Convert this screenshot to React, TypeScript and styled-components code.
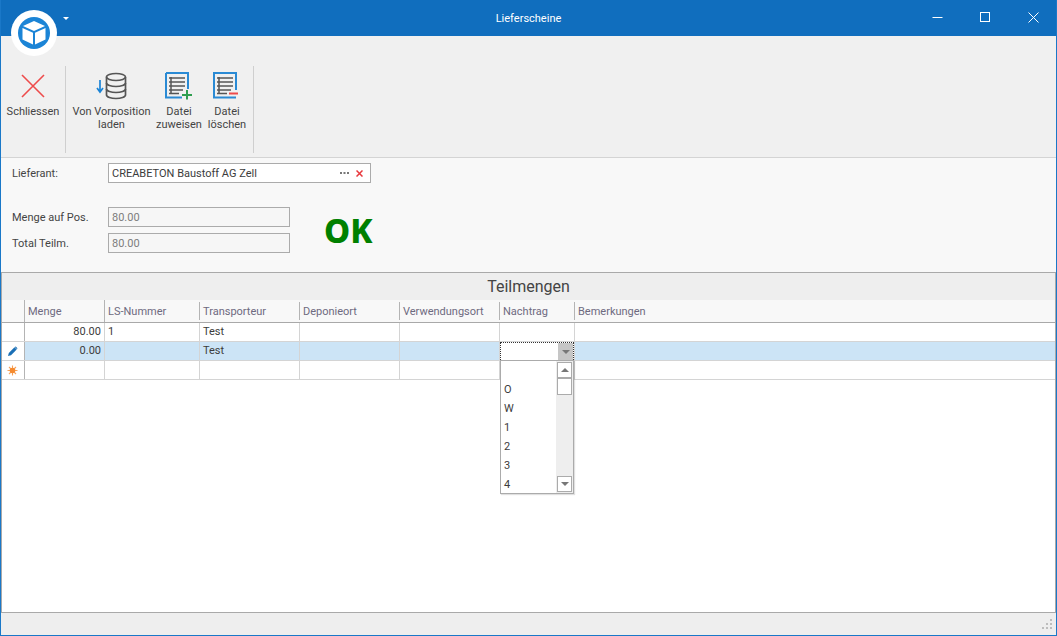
import React from 'react';
import styled, { createGlobalStyle } from 'styled-components';

const GlobalStyle = createGlobalStyle`
  html, body { margin: 0; padding: 0; background: #fff; }
  * { box-sizing: border-box; }
`;

const Window = styled.div`
  position: relative;
  width: 1057px;
  height: 636px;
  display: flex;
  flex-direction: column;
  overflow: hidden;
  border-left: 1px solid #1a78c8;
  border-right: 1px solid #1a78c8;
  border-bottom: 1px solid #1a78c8;
  font-family: Roboto, 'Liberation Sans', Arial, sans-serif;
  font-size: 11px;
  color: #3c3c3c;
  background: #f0f0f0;
`;

const TitleBar = styled.div`
  position: relative;
  height: 36px;
  margin: 0 -1px;
  flex: none;
  background: #106ebe;
  color: #fff;
  display: flex;
  align-items: center;
  justify-content: center;
  font-size: 11px;
`;

const Logo = styled.div`
  position: absolute;
  left: 11px;
  top: 10px;
  width: 46px;
  height: 46px;
  z-index: 3;
`;

const QuickCaret = styled.div`
  position: absolute;
  left: 63px;
  top: 17px;
  width: 0;
  height: 0;
  border-left: 3px solid transparent;
  border-right: 3px solid transparent;
  border-top: 3px solid #fff;
`;

const WindowButtons = styled.div`
  position: absolute;
  right: 0;
  top: 0;
  height: 36px;
  display: flex;
`;

const WindowButton = styled.div`
  width: 48px;
  height: 36px;
  display: flex;
  align-items: center;
  justify-content: center;
  padding-bottom: 1px;
`;

const Ribbon = styled.div`
  flex: none;
  height: 122px;
  padding: 30px 0 4px 3px;
  display: flex;
  background: #f0f0f0;
  border-bottom: 1px solid #d4d4d4;
`;

const RibbonGroup = styled.div`
  display: flex;
  padding-right: 3px;
  margin-right: 3px;
  border-right: 1px solid #cfcfcf;
`;

const RibbonButton = styled.div<{ $width: number }>`
  width: ${(p) => p.$width}px;
  display: flex;
  flex-direction: column;
  align-items: center;
  text-align: center;
  line-height: 13px;
  color: #444;
`;

const RibbonIcon = styled.div`
  height: 32px;
  margin-top: 4px;
  margin-bottom: 3px;
  display: flex;
  align-items: center;
  justify-content: center;
`;

const FormPanel = styled.div`
  flex: none;
  height: 114px;
  background: #f8f8f8;
  padding: 5px 0 0 11px;
  display: flex;
  flex-direction: column;
`;

const FormRow = styled.div<{ $gap?: number }>`
  display: flex;
  align-items: center;
  height: 20px;
  margin-top: ${(p) => p.$gap ?? 0}px;
`;

const FieldLabel = styled.div`
  width: 96px;
  color: #444;
`;

const LookupBox = styled.div`
  width: 263px;
  height: 20px;
  background: #fff;
  border: 1px solid #ababab;
  display: flex;
  align-items: center;
  padding: 0 3px;
  color: #3c3c3c;
`;

const LookupText = styled.div`
  flex: 1;
`;

const LookupButton = styled.div`
  width: 15px;
  display: flex;
  justify-content: center;
  align-items: center;
`;

const ReadOnlyBox = styled.div`
  width: 182px;
  height: 20px;
  background: #f6f6f6;
  border: 1px solid #ababab;
  display: flex;
  align-items: center;
  padding: 0 3px;
  color: #7d7d7d;
`;

const FigureArea = styled.div`
  display: flex;
  align-items: center;
`;

const FigureFields = styled.div`
  display: flex;
  flex-direction: column;
`;

const OkText = styled.div`
  margin-left: 34px;
  margin-top: 25px;
  font-family: 'Noto Sans', Verdana, sans-serif;
  font-weight: 800;
  font-size: 33px;
  color: #008000;
  line-height: 36px;
`;

const GridPanel = styled.div`
  flex: 1;
  display: flex;
  flex-direction: column;
  border: 1px solid #a9a9a9;
  background: #fff;
`;

const GroupTitle = styled.div`
  flex: none;
  height: 27px;
  background: #eeeeee;
  display: flex;
  align-items: center;
  justify-content: center;
  font-size: 16px;
  color: #444;
`;

const GridColumns = '23px 80px 95px 100px 100px 100px 75px 1fr';

const HeaderRow = styled.div`
  flex: none;
  height: 23px;
  display: grid;
  grid-template-columns: ${GridColumns};
  background: #f8f8f8;
  border-bottom: 1px solid #a9a9a9;
`;

const HeaderCell = styled.div<{ $tall?: boolean }>`
  color: #6e6a80;
  padding: ${(p) => (p.$tall ? 4 : 2)}px 3px 0;
  height: ${(p) => (p.$tall ? 22 : 18)}px;
  margin-top: ${(p) => (p.$tall ? 0 : 2)}px;
  line-height: 16px;
  border-right: 1px solid #b4b4b4;
`;

const Row = styled.div<{ $selected?: boolean }>`
  flex: none;
  height: 19px;
  display: grid;
  grid-template-columns: ${GridColumns};
  border-bottom: 1px solid #d4d4d4;
  background: ${(p) => (p.$selected ? '#cce4f6' : '#fff')};
  &:nth-child(n) > div:first-child {
    background: #fff;
  }
`;

const Cell = styled.div<{ $right?: boolean }>`
  position: relative;
  border-right: 1px solid #d4d4d4;
  padding: 0 3px;
  line-height: 18px;
  text-align: ${(p) => (p.$right ? 'right' : 'left')};
  color: #3c3c3c;
`;

const IndicatorCell = styled.div`
  border-right: 1px solid #b4b4b4;
  display: flex;
  align-items: center;
  justify-content: center;
  padding-right: 1px;
`;

const PlainCell = styled.div`
  &:last-child {
    border: 0;
  }
`;

const GridBody = styled.div`
  flex: 1;
  background: #fff;
`;

const ComboEditor = styled.div`
  position: absolute;
  left: 0;
  top: 0;
  width: 74px;
  height: 18px;
  background: #fff;
  border: 1px dotted #333;
  border-bottom: 0;
  display: flex;
  justify-content: flex-end;
`;

const ComboArrow = styled.div`
  width: 15px;
  background: #c6c6c6;
  display: flex;
  align-items: center;
  justify-content: center;
`;

const Caret = styled.div<{ $up?: boolean }>`
  width: 0;
  height: 0;
  border-left: 4px solid transparent;
  border-right: 4px solid transparent;
  ${(p) => (p.$up ? 'border-bottom: 4px solid #777;' : 'border-top: 4px solid #777;')}
`;

const DropDown = styled.div`
  position: absolute;
  left: 0;
  top: 18px;
  width: 74px;
  height: 134px;
  background: #fff;
  border: 1px solid #ababab;
  box-shadow: 1px 1px 1px rgba(0, 0, 0, 0.12);
  z-index: 2;
  display: flex;
`;

const DropList = styled.div`
  flex: 1;
  padding: 0 3px;
`;

const DropItem = styled.div`
  height: 19px;
  line-height: 19px;
  color: #3c3c3c;
`;

const ScrollBar = styled.div`
  width: 17px;
  background: #eeeeee;
  display: flex;
  flex-direction: column;
  padding: 1px;
`;

const ScrollButton = styled.div`
  width: 15px;
  height: 16px;
  flex: none;
  background: #fff;
  border: 1px solid #ababab;
  display: flex;
  align-items: center;
  justify-content: center;
`;

const ScrollThumb = styled.div`
  width: 15px;
  height: 17px;
  flex: none;
  background: #fff;
  border: 1px solid #ababab;
`;

const ScrollTrack = styled.div`
  flex: 1;
`;

const StatusBar = styled.div`
  flex: none;
  height: 22px;
  background: #eeeeee;
  display: flex;
  align-items: flex-end;
  justify-content: flex-end;
  padding: 0 3px 4px 0;
`;

const columns = ['Menge', 'LS-Nummer', 'Transporteur', 'Deponieort', 'Verwendungsort', 'Nachtrag', 'Bemerkungen'];
const dropItems = ['', 'O', 'W', '1', '2', '3', '4'];

function LogoIcon() {
  return (
    <svg width="46" height="46" viewBox="0 0 46 46">
      <circle cx="23" cy="23" r="23" fill="#fff" />
      <circle cx="23" cy="23" r="16" fill="#1b84d6" />
      <path d="M23 11 L34 16 L23 21 L12 16 Z" fill="#fff" />
      <path d="M11.5 18 L22 22.7 L22 34.5 L11.5 29.5 Z" fill="#fff" />
      <path d="M34.5 18 L24 22.7 L24 34.5 L34.5 29.5 Z" fill="#fff" />
    </svg>
  );
}

function CloseIcon() {
  return (
    <svg width="26" height="26" viewBox="0 0 26 26">
      <path d="M2 2 L24 24 M24 2 L2 24" stroke="#ee4b4b" strokeWidth="1.6" fill="none" />
    </svg>
  );
}

function DatabaseIcon() {
  return (
    <svg width="32" height="28" viewBox="0 0 32 28">
      <path d="M4 8 V19 M1 16 L4 20 L7 16" stroke="#1b84d6" strokeWidth="1.7" fill="none" />
      <g stroke="#555" strokeWidth="1.7" fill="none">
        <ellipse cx="20" cy="5" rx="9.5" ry="3.5" />
        <path d="M10.5 5 V23 C10.5 25 15 26.5 20 26.5 C25 26.5 29.5 25 29.5 23 V5" />
        <path d="M10.5 11 C10.5 13 15 14.5 20 14.5 C25 14.5 29.5 13 29.5 11" />
        <path d="M10.5 17 C10.5 19 15 20.5 20 20.5 C25 20.5 29.5 19 29.5 17" />
      </g>
    </svg>
  );
}

function FileIcon({ sign }: { sign: 'plus' | 'minus' }) {
  return (
    <svg width="28" height="28" viewBox="0 0 28 28">
      {sign === 'plus' ? (
        <path d="M1 1 H23 V17 M17 25.5 H1 V1" stroke="#2a8ad4" strokeWidth="2" fill="none" />
      ) : (
        <path d="M23 18 V1 H1 V25.5 H23" stroke="#2a8ad4" strokeWidth="2" fill="none" />
      )}
      <g stroke="#555" strokeWidth="1.5">
        <path d="M6 5 V22" />
        <path d="M4 6 H20 M4 10 H20 M4 14 H20 M4 18 H18 M4 21.5 H14" />
      </g>
      {sign === 'plus' ? (
        <path d="M22 18 V27.5 M17 23 H27" stroke="#2e9e4f" strokeWidth="2" fill="none" />
      ) : (
        <path d="M16 21.5 H25" stroke="#ee4b4b" strokeWidth="2" fill="none" />
      )}
    </svg>
  );
}

function PencilIcon() {
  return (
    <svg width="11" height="11" viewBox="0 0 11 11">
      <path d="M1 10 L1.8 7 L7.5 1.3 L9.7 3.5 L4 9.2 Z" fill="#1a6fb5" />
      <path d="M7.8 1 L8.8 0.6 L10.4 2.2 L10 3.2 Z" fill="#1a6fb5" />
    </svg>
  );
}

function NewRowIcon() {
  return (
    <svg width="11" height="11" viewBox="0 0 11 11">
      <g stroke="#f7a35c" strokeWidth="1.1">
        <path d="M5.5 0.5 V10.5 M0.5 5.5 H10.5 M2 2 L9 9 M9 2 L2 9" />
      </g>
      <circle cx="5.5" cy="5.5" r="2.8" fill="#f58a2e" />
    </svg>
  );
}

function Grip() {
  return (
    <svg width="12" height="12" viewBox="0 0 12 12" fill="#bdbdbd">
      <rect x="9" y="0" width="2" height="2" />
      <rect x="5" y="4" width="2" height="2" />
      <rect x="9" y="4" width="2" height="2" />
      <rect x="1" y="8" width="2" height="2" />
      <rect x="5" y="8" width="2" height="2" />
      <rect x="9" y="8" width="2" height="2" />
    </svg>
  );
}

export default function App() {
  return (
    <Window>
      <GlobalStyle />
      <TitleBar>
        Lieferscheine
        <Logo>
          <LogoIcon />
        </Logo>
        <QuickCaret />
        <WindowButtons>
          <WindowButton>
            <svg width="11" height="11" viewBox="0 0 11 11">
              <path d="M0.5 5.5 H10.5" stroke="#fff" />
            </svg>
          </WindowButton>
          <WindowButton>
            <svg width="11" height="11" viewBox="0 0 11 11">
              <rect x="0.5" y="0.5" width="9" height="9" stroke="#fff" fill="none" />
            </svg>
          </WindowButton>
          <WindowButton>
            <svg width="11" height="11" viewBox="0 0 11 11">
              <path d="M0.5 0.5 L10.5 10.5 M10.5 0.5 L0.5 10.5" stroke="#fff" />
            </svg>
          </WindowButton>
        </WindowButtons>
      </TitleBar>
      <Ribbon>
        <RibbonGroup>
          <RibbonButton $width={58}>
            <RibbonIcon>
              <CloseIcon />
            </RibbonIcon>
            Schliessen
          </RibbonButton>
        </RibbonGroup>
        <RibbonGroup>
          <RibbonButton $width={85}>
            <RibbonIcon>
              <DatabaseIcon />
            </RibbonIcon>
            Von Vorposition
            <br />
            laden
          </RibbonButton>
          <RibbonButton $width={50}>
            <RibbonIcon>
              <FileIcon sign="plus" />
            </RibbonIcon>
            Datei
            <br />
            zuweisen
          </RibbonButton>
          <RibbonButton $width={46}>
            <RibbonIcon>
              <FileIcon sign="minus" />
            </RibbonIcon>
            Datei
            <br />
            löschen
          </RibbonButton>
        </RibbonGroup>
      </Ribbon>
      <FormPanel>
        <FormRow>
          <FieldLabel>Lieferant:</FieldLabel>
          <LookupBox>
            <LookupText>CREABETON Baustoff AG Zell</LookupText>
            <LookupButton>
              <svg width="9" height="3" viewBox="0 0 9 3" fill="#777">
                <rect x="0" y="0" width="2" height="2" />
                <rect x="3.5" y="0" width="2" height="2" />
                <rect x="7" y="0" width="2" height="2" />
              </svg>
            </LookupButton>
            <LookupButton>
              <svg width="7" height="7" viewBox="0 0 7 7">
                <path d="M0.5 0.5 L6.5 6.5 M6.5 0.5 L0.5 6.5" stroke="#e8383d" strokeWidth="1.5" />
              </svg>
            </LookupButton>
          </LookupBox>
        </FormRow>
        <FigureArea>
          <FigureFields>
            <FormRow $gap={24}>
              <FieldLabel>Menge auf Pos.</FieldLabel>
              <ReadOnlyBox>80.00</ReadOnlyBox>
            </FormRow>
            <FormRow $gap={6}>
              <FieldLabel>Total Teilm.</FieldLabel>
              <ReadOnlyBox>80.00</ReadOnlyBox>
            </FormRow>
          </FigureFields>
          <OkText>OK</OkText>
        </FigureArea>
      </FormPanel>
      <GridPanel>
        <GroupTitle>Teilmengen</GroupTitle>
        <HeaderRow>
          <HeaderCell $tall />
          {columns.map((c, i) => (
            <HeaderCell key={c} $tall={i === 0} style={i === columns.length - 1 ? { borderRight: 0 } : undefined}>
              {c}
            </HeaderCell>
          ))}
        </HeaderRow>
        <Row>
          <IndicatorCell />
          <Cell $right>80.00</Cell>
          <Cell>1</Cell>
          <Cell>Test</Cell>
          <Cell />
          <Cell />
          <Cell />
          <PlainCell />
        </Row>
        <Row $selected>
          <IndicatorCell>
            <PencilIcon />
          </IndicatorCell>
          <Cell $right>0.00</Cell>
          <Cell />
          <Cell>Test</Cell>
          <Cell />
          <Cell />
          <Cell>
            <ComboEditor>
              <ComboArrow>
                <Caret />
              </ComboArrow>
            </ComboEditor>
            <DropDown>
              <DropList>
                {dropItems.map((item, i) => (
                  <DropItem key={`item${i + 1}`}>{item}</DropItem>
                ))}
              </DropList>
              <ScrollBar>
                <ScrollButton>
                  <Caret $up />
                </ScrollButton>
                <ScrollThumb />
                <ScrollTrack />
                <ScrollButton>
                  <Caret />
                </ScrollButton>
              </ScrollBar>
            </DropDown>
          </Cell>
          <PlainCell />
        </Row>
        <Row>
          <IndicatorCell>
            <NewRowIcon />
          </IndicatorCell>
          <Cell />
          <Cell />
          <Cell />
          <Cell />
          <Cell />
          <Cell />
          <PlainCell />
        </Row>
        <GridBody />
      </GridPanel>
      <StatusBar>
        <Grip />
      </StatusBar>
    </Window>
  );
}
